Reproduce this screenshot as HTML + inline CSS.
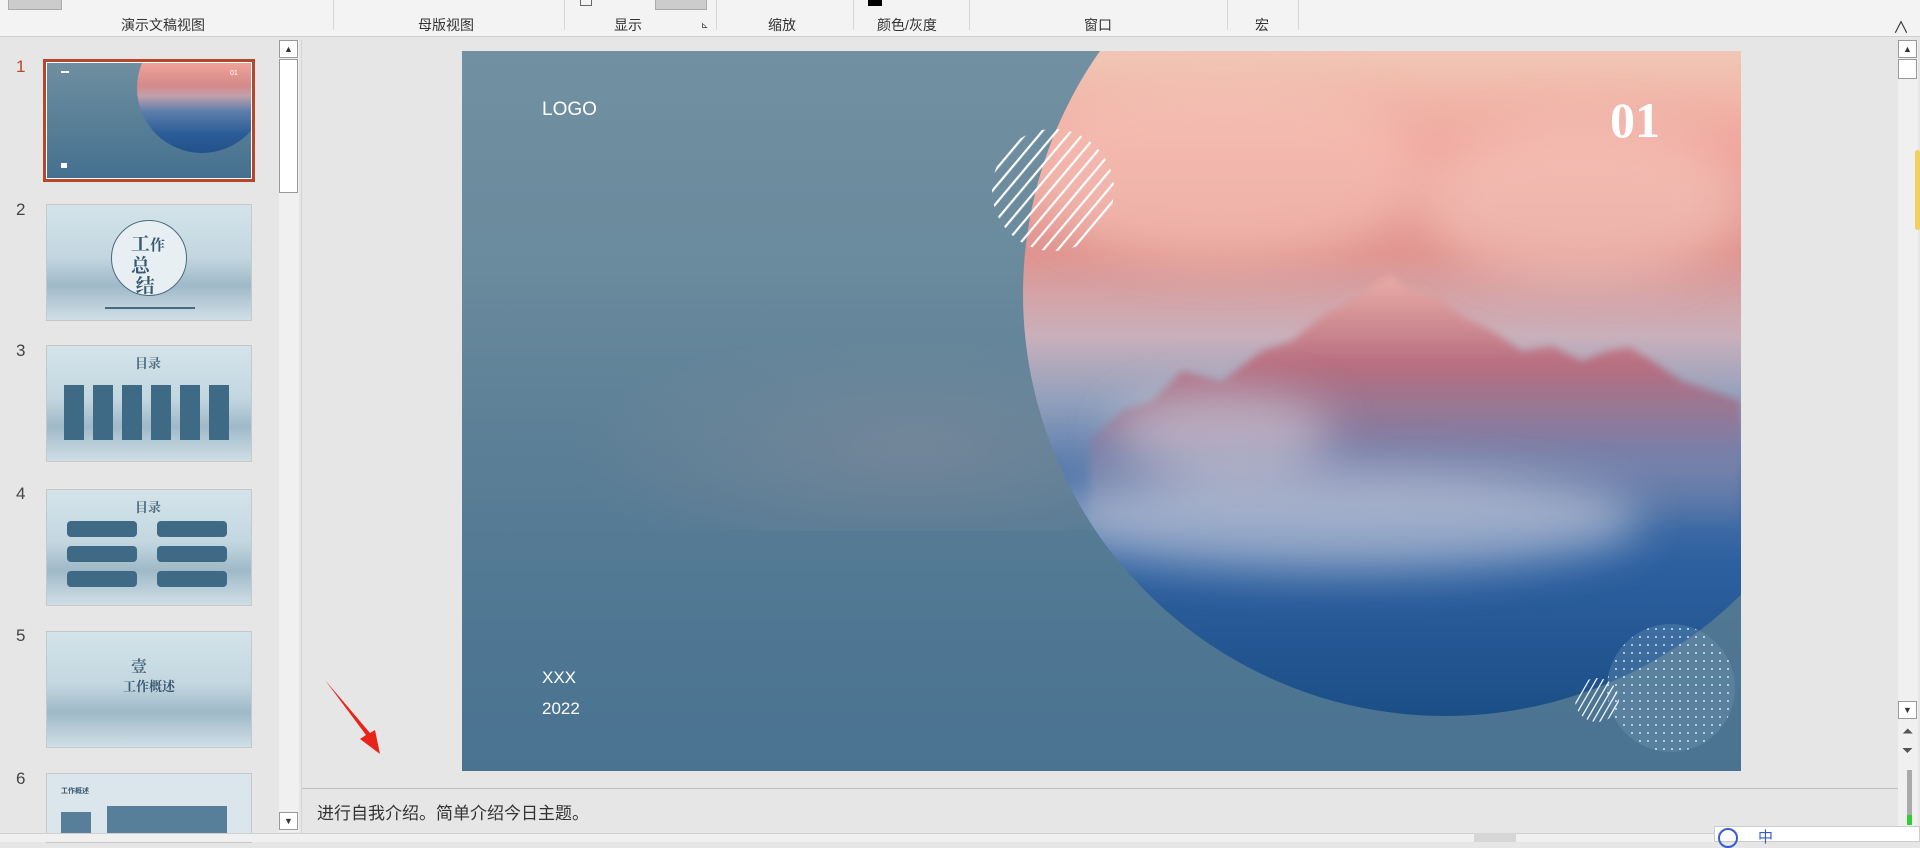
<!DOCTYPE html>
<html><head><meta charset="utf-8"><style>
*{margin:0;padding:0;box-sizing:border-box}
body{width:1920px;height:842px;overflow:hidden;background:#e6e6e6;font-family:"Liberation Sans","Noto Sans CJK SC",sans-serif;position:relative;color:#333}
.ab{position:absolute}
.rib{left:0;top:0;width:1920px;height:37px;background:#f3f3f3;border-bottom:1px solid #d0d0d0}
.rl{position:absolute;top:15px;font-size:14px;color:#333}
.sep{position:absolute;top:0;width:1px;height:30px;background:#d6d6d6}
.num{position:absolute;left:16px;font-size:17px;color:#444}
.th{position:absolute;left:46px;width:206px;height:117px;overflow:hidden;border:1px solid #c8c8c8}
.mist{background:linear-gradient(180deg,#d4e3ea 0%,#c3d7e0 45%,#9fb9c8 70%,#d0dfe6 100%)}
</style></head><body>
<div class="ab rib">
 <div class="ab" style="left:8px;top:0;width:54px;height:10px;background:#ccc;border:1px solid #aaa;border-top:none"></div>
 <div class="rl" style="left:121px">演示文稿视图</div>
 <div class="sep" style="left:333px"></div>
 <div class="rl" style="left:418px">母版视图</div>
 <div class="sep" style="left:564px"></div>
 <div class="ab" style="left:580px;top:0;width:12px;height:6px;border:1px solid #666;border-top:none"></div>
 <div class="ab" style="left:655px;top:0;width:52px;height:10px;background:#ccc;border:1px solid #aaa;border-top:none"></div>
 <div class="rl" style="left:614px">显示</div>
 <div class="ab" style="left:701px;top:20px;font-size:9px">⊾</div>
 <div class="sep" style="left:716px"></div>
 <div class="rl" style="left:768px">缩放</div>
 <div class="sep" style="left:853px"></div>
 <div class="ab" style="left:868px;top:0;width:14px;height:6px;background:#000"></div>
 <div class="rl" style="left:877px">颜色/灰度</div>
 <div class="sep" style="left:969px"></div>
 <div class="rl" style="left:1084px">窗口</div>
 <div class="sep" style="left:1227px"></div>
 <div class="rl" style="left:1255px">宏</div>
 <div class="sep" style="left:1298px"></div>
 <div class="ab" style="left:1893px;top:14px;font-size:16px">∧</div>
</div>
<!-- left panel -->
<div class="ab" style="left:279px;top:40px;width:20px;height:792px;background:#f0f0f0"></div>
<div class="ab" style="left:279px;top:40px;width:19px;height:18px;background:#fff;border:1px solid #999;font-size:9px;text-align:center;line-height:16px">▲</div>
<div class="ab" style="left:279px;top:59px;width:19px;height:134px;background:#fff;border:1px solid #999"></div>
<div class="ab" style="left:279px;top:812px;width:19px;height:18px;background:#fff;border:1px solid #999;font-size:9px;text-align:center;line-height:16px">▼</div>
<div class="ab" style="left:301px;top:40px;width:1px;height:795px;background:#d4d4d4"></div>

<div class="num" style="top:57px;color:#b7472a">1</div>
<div class="ab" style="left:43px;top:59px;width:212px;height:123px;border:3px solid #b7472a"></div>
<div class="th" style="top:62px;border:1px solid #fff;background:linear-gradient(180deg,#6f8fa0,#44708f)">
 <div class="ab" style="left:90px;top:-40px;width:130px;height:130px;border-radius:50%;background:linear-gradient(180deg,#f0ddd0 0%,#f0a49a 30%,#d48a8a 48%,#c2a0ad 56%,#5d7eaa 68%,#2c5d98 85%,#23508a 100%)"></div>
 <div class="ab" style="left:14px;top:8px;width:8px;height:2px;background:#fff"></div>
 <div class="ab" style="left:183px;top:7px;color:#fff;font-size:7px">01</div>
 <div class="ab" style="left:14px;top:100px;width:6px;height:5px;background:#fff"></div>
</div>
<div class="num" style="top:200px">2</div>
<div class="th mist" style="top:204px">
 <div class="ab" style="left:64px;top:15px;width:76px;height:76px;border-radius:50%;background:#e7eff3;border:1px solid #4a6a80"></div>
 <div class="ab" style="left:84px;top:28px;font:bold 19px 'Noto Serif CJK SC',serif;color:#3a5870;line-height:20px">工<span style="font-size:15px">作</span><br>总<br>&nbsp;结</div>
 <div class="ab" style="left:58px;top:102px;width:90px;height:2px;background:#4a6a80"></div>
</div>
<div class="num" style="top:341px">3</div>
<div class="th mist" style="top:345px">
 <div class="ab" style="left:88px;top:7px;font:bold 13px 'Noto Serif CJK SC',serif;color:#4a6a80">目录</div>
 <div class="ab" style="left:17px;top:39px;width:165px;height:55px;background:repeating-linear-gradient(90deg,#3e6a86 0 20px,transparent 20px 29px)"></div>
</div>
<div class="num" style="top:484px">4</div>
<div class="th mist" style="top:489px">
 <div class="ab" style="left:88px;top:7px;font:bold 13px 'Noto Serif CJK SC',serif;color:#4a6a80">目录</div>
 <div class="ab" style="left:20px;top:31px;width:70px;height:16px;background:#3e6a86;border-radius:4px"></div>
 <div class="ab" style="left:110px;top:31px;width:70px;height:16px;background:#3e6a86;border-radius:4px"></div>
 <div class="ab" style="left:20px;top:56px;width:70px;height:16px;background:#3e6a86;border-radius:4px"></div>
 <div class="ab" style="left:110px;top:56px;width:70px;height:16px;background:#3e6a86;border-radius:4px"></div>
 <div class="ab" style="left:20px;top:81px;width:70px;height:16px;background:#3e6a86;border-radius:4px"></div>
 <div class="ab" style="left:110px;top:81px;width:70px;height:16px;background:#3e6a86;border-radius:4px"></div>
</div>
<div class="num" style="top:626px">5</div>
<div class="th mist" style="top:631px">
 <div class="ab" style="left:84px;top:22px;font:bold 16px 'Noto Serif CJK SC',serif;color:#4a6a80">壹</div>
 <div class="ab" style="left:76px;top:44px;font:bold 13px 'Noto Serif CJK SC',serif;color:#3a5870">工作概述</div>
</div>
<div class="num" style="top:769px">6</div>
<div class="th" style="top:773px;background:#dbe6ec;height:70px">
 <div class="ab" style="left:14px;top:12px;font-size:7px;color:#3a5870;font-weight:bold">工作概述</div>
 <div class="ab" style="left:60px;top:32px;width:120px;height:40px;background:#587f9a"></div>
 <div class="ab" style="left:14px;top:38px;width:30px;height:40px;background:#587f9a"></div>
</div>

<!-- slide -->
<div class="ab" style="left:462px;top:51px;width:1279px;height:720px;overflow:hidden;background:linear-gradient(180deg,#7191a2 0%,#6a8a9d 30%,#5b7f96 55%,#4f7793 80%,#4a7392 100%)">
 <div class="ab" style="left:100px;top:280px;width:700px;height:200px;background:radial-gradient(ellipse at 50% 60%,rgba(170,150,160,.3),transparent 70%)"></div>
 <svg class="ab" style="left:0;top:0" width="1279" height="720">
  <defs>
   <clipPath id="cc"><circle cx="983" cy="243" r="422"/></clipPath>
   <filter id="bl" x="-30%" y="-30%" width="160%" height="160%"><feGaussianBlur stdDeviation="22"/></filter>
   <filter id="bl2"><feGaussianBlur stdDeviation="4"/></filter>
   <linearGradient id="cg" x1="0" y1="0" x2="0" y2="1">
    <stop offset="0" stop-color="#efe0d2"/><stop offset=".22" stop-color="#f1c5b4"/><stop offset=".33" stop-color="#f0a49c"/>
    <stop offset=".45" stop-color="#e0948f"/><stop offset=".55" stop-color="#c9b0bb"/><stop offset=".63" stop-color="#8f9fbc"/>
    <stop offset=".72" stop-color="#4f74a8"/><stop offset=".82" stop-color="#2d60a0"/><stop offset="1" stop-color="#1c4e86"/>
   </linearGradient>
   <linearGradient id="mg" x1="0" y1="0" x2="0" y2="1">
    <stop offset="0" stop-color="#ecb0a8"/><stop offset=".35" stop-color="#b8687a"/><stop offset=".7" stop-color="#7a7fa8"/><stop offset="1" stop-color="#8a90b0" stop-opacity="0"/>
   </linearGradient>
   <pattern id="dp" width="8" height="8" patternUnits="userSpaceOnUse"><circle cx="2" cy="2" r="1" fill="#fff"/></pattern>
   <pattern id="sp" width="11" height="11" patternUnits="userSpaceOnUse" patternTransform="rotate(40)"><rect width="2.2" height="11" fill="#fff"/></pattern>
   <pattern id="sp2" width="6" height="6" patternUnits="userSpaceOnUse" patternTransform="rotate(30)"><rect width="1.2" height="6" fill="#fff"/></pattern>
  </defs>
  <circle cx="983" cy="243" r="422" fill="url(#cg)"/>
  <g clip-path="url(#cc)">
   <g filter="url(#bl2)">
   <path d="M628 390 L660 360 L690 350 L720 320 L760 330 L800 300 L830 290 L860 265 L890 250 L910 235 L928 224 L945 238 L975 245 L1000 265 L1030 280 L1060 300 L1090 295 L1120 310 L1145 300 L1167 296 L1190 310 L1220 330 L1279 350 L1279 480 L628 480 Z" fill="url(#mg)" opacity=".9"/>
   </g>
   <g filter="url(#bl)">
    <ellipse cx="880" cy="470" rx="300" ry="50" fill="#e6e0e8" opacity=".55"/>
    <ellipse cx="760" cy="120" rx="200" ry="90" fill="#f6c8bc" opacity=".55"/>
    <ellipse cx="1120" cy="150" rx="160" ry="80" fill="#f8d2c6" opacity=".5"/>
    <ellipse cx="760" cy="380" rx="110" ry="40" fill="#e8dcdf" opacity=".5"/>
   </g>
  </g>
  <circle cx="591" cy="139" r="61" fill="url(#sp)"/>
  <circle cx="1209" cy="637" r="64" fill="rgba(120,160,190,.3)"/>
  <circle cx="1209" cy="637" r="64" fill="url(#dp)" opacity=".8"/>
  <circle cx="1135" cy="649" r="22" fill="url(#sp2)"/>
 </svg>
 <div class="ab" style="left:80px;top:48px;color:#fff;font-size:19px">LOGO</div>
 <div class="ab" style="left:1148px;top:40px;color:#fff;font:bold 50px 'Liberation Serif',serif">01</div>
 <div class="ab" style="left:80px;top:617px;color:#fff;font-size:17px">XXX</div>
 <div class="ab" style="left:80px;top:648px;color:#fff;font-size:17px">2022</div>
</div>

<!-- red arrow -->
<svg class="ab" style="left:320px;top:675px" width="65" height="85"><path d="M5 5 L46 60 L40 64 L60 79 L55 55 L50 58 Z" fill="#e8231a"/></svg>

<!-- right scrollbar -->
<div class="ab" style="left:1898px;top:40px;width:20px;height:792px;background:#f0f0f0"></div>
<div class="ab" style="left:1898px;top:40px;width:19px;height:18px;background:#fff;border:1px solid #999;font-size:9px;text-align:center;line-height:16px">▲</div>
<div class="ab" style="left:1898px;top:59px;width:19px;height:20px;background:#fff;border:1px solid #999"></div>
<div class="ab" style="left:1898px;top:701px;width:19px;height:18px;background:#fff;border:1px solid #999;font-size:9px;text-align:center;line-height:16px">▼</div>
<div class="ab" style="left:1902px;top:722px;font-size:14px;color:#555;line-height:19px">⏶<br>⏷</div>
<div class="ab" style="left:1907px;top:770px;width:5px;height:55px;background:#aaa"></div>
<div class="ab" style="left:1907px;top:815px;width:5px;height:10px;background:#3c3"></div>
<div class="ab" style="left:1915px;top:150px;width:5px;height:80px;background:#f2d060;border-radius:3px"></div>

<!-- notes -->
<div class="ab" style="left:302px;top:788px;width:1596px;height:1px;background:#bdbdbd"></div>
<div class="ab" style="left:317px;top:799px;font-size:17px;color:#333">进行自我介绍。简单介绍今日主题。</div>
<!-- status -->
<div class="ab" style="left:0;top:833px;width:1920px;height:9px;background:#f0f0f0;border-top:1px solid #d0d0d0"></div>
<div class="ab" style="left:1474px;top:833px;width:42px;height:9px;background:#d6d6d6"></div>
<div class="ab" style="left:1714px;top:826px;width:206px;height:16px;background:#fff;border:1px solid #ccc"></div>
<div class="ab" style="left:1718px;top:828px;width:20px;height:20px;border:2px solid #3a5bd0;border-radius:50%"></div>
<div class="ab" style="left:1758px;top:826px;font-size:15px;color:#3a5bd0">中</div>
</body></html>
